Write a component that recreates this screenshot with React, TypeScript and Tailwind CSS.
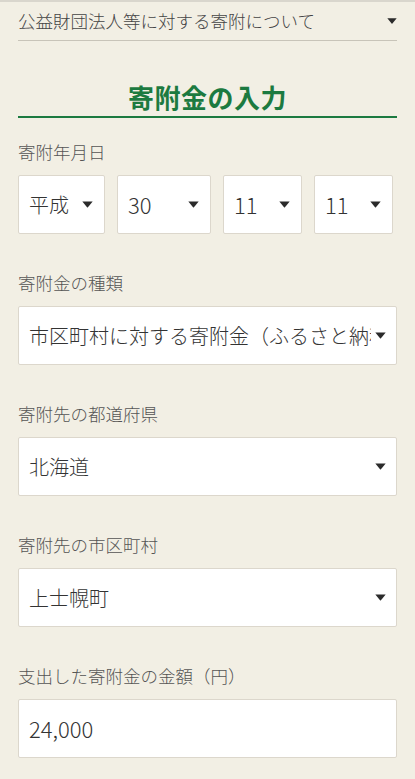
import React from 'react';

const Caret: React.FC<{ className?: string }> = ({ className }) => (
  <svg viewBox="0 0 10 6" className={className} fill="#2b2b2b">
    <path d="M0.3 0.3 L9.7 0.3 L5.4 5.6 Q5 6 4.6 5.6 Z" />
  </svg>
);

const Label: React.FC<{ children: React.ReactNode; first?: boolean }> = ({ children, first }) => (
  <div className={`${first ? 'mt-[22px]' : 'mt-[37px]'} mb-[11px] h-[24px] leading-[24px] text-[17.5px] font-light text-[#555]`}>
    {children}
  </div>
);

const SelectBox: React.FC<{ value: string; latin?: boolean; className?: string; caretGap?: string }> = ({
  value,
  latin,
  className,
  caretGap,
}) => (
  <div
    className={`flex items-center h-[59px] bg-white border border-[#dcd7cc] rounded-[2px] pl-[10px] ${caretGap ?? 'pr-[10px]'} ${className ?? ''}`}
  >
    <span
      className={`flex-1 overflow-hidden whitespace-nowrap font-light text-[#333] ${latin ? 'text-[22px]' : 'text-[20px]'}`}
    >
      {value}
    </span>
    <Caret className="w-[11px] h-[7px] ml-[4px] shrink-0" />
  </div>
);

export default function App() {
  return (
    <div
      className="min-h-screen bg-[#f2efe4] border-t-2 border-[#d9d6cd] px-[18px] pb-[30px]"
      style={{ fontFamily: '"Noto Sans CJK JP", "Noto Sans", sans-serif' }}
    >
      <div className="flex items-center justify-between h-[39px] border-b border-[#c8c4b9]">
        <span className="text-[17.5px] font-light text-[#444]">公益財団法人等に対する寄附について</span>
        <Caret className="w-[10px] h-[6px]" />
      </div>

      <div className="mt-[41px] pb-[4px] border-b-2 border-[#1c7a40] text-center">
        <h1 className="text-[26px] leading-[30px] font-bold text-[#1c7a40] tracking-[0.5px]">寄附金の入力</h1>
      </div>

      <Label first>寄附年月日</Label>
      <div className="flex gap-[12px]">
        <SelectBox value="平成" className="w-[87px]" caretGap="pr-[11px]" />
        <SelectBox value="30" latin className="w-[94px]" caretGap="pr-[11px]" />
        <SelectBox value="11" latin className="w-[79px]" caretGap="pr-[11px]" />
        <SelectBox value="11" latin className="w-[79px]" caretGap="pr-[11px]" />
      </div>

      <Label>寄附金の種類</Label>
      <SelectBox value="市区町村に対する寄附金（ふるさと納税）" />

      <Label>寄附先の都道府県</Label>
      <SelectBox value="北海道" />

      <Label>寄附先の市区町村</Label>
      <SelectBox value="上士幌町" />

      <Label>支出した寄附金の金額（円）</Label>
      <div className="flex items-center h-[59px] bg-white border border-[#dcd7cc] rounded-[2px] px-[10px]">
        <span className="text-[22px] font-light text-[#333]">24,000</span>
      </div>
    </div>
  );
}
